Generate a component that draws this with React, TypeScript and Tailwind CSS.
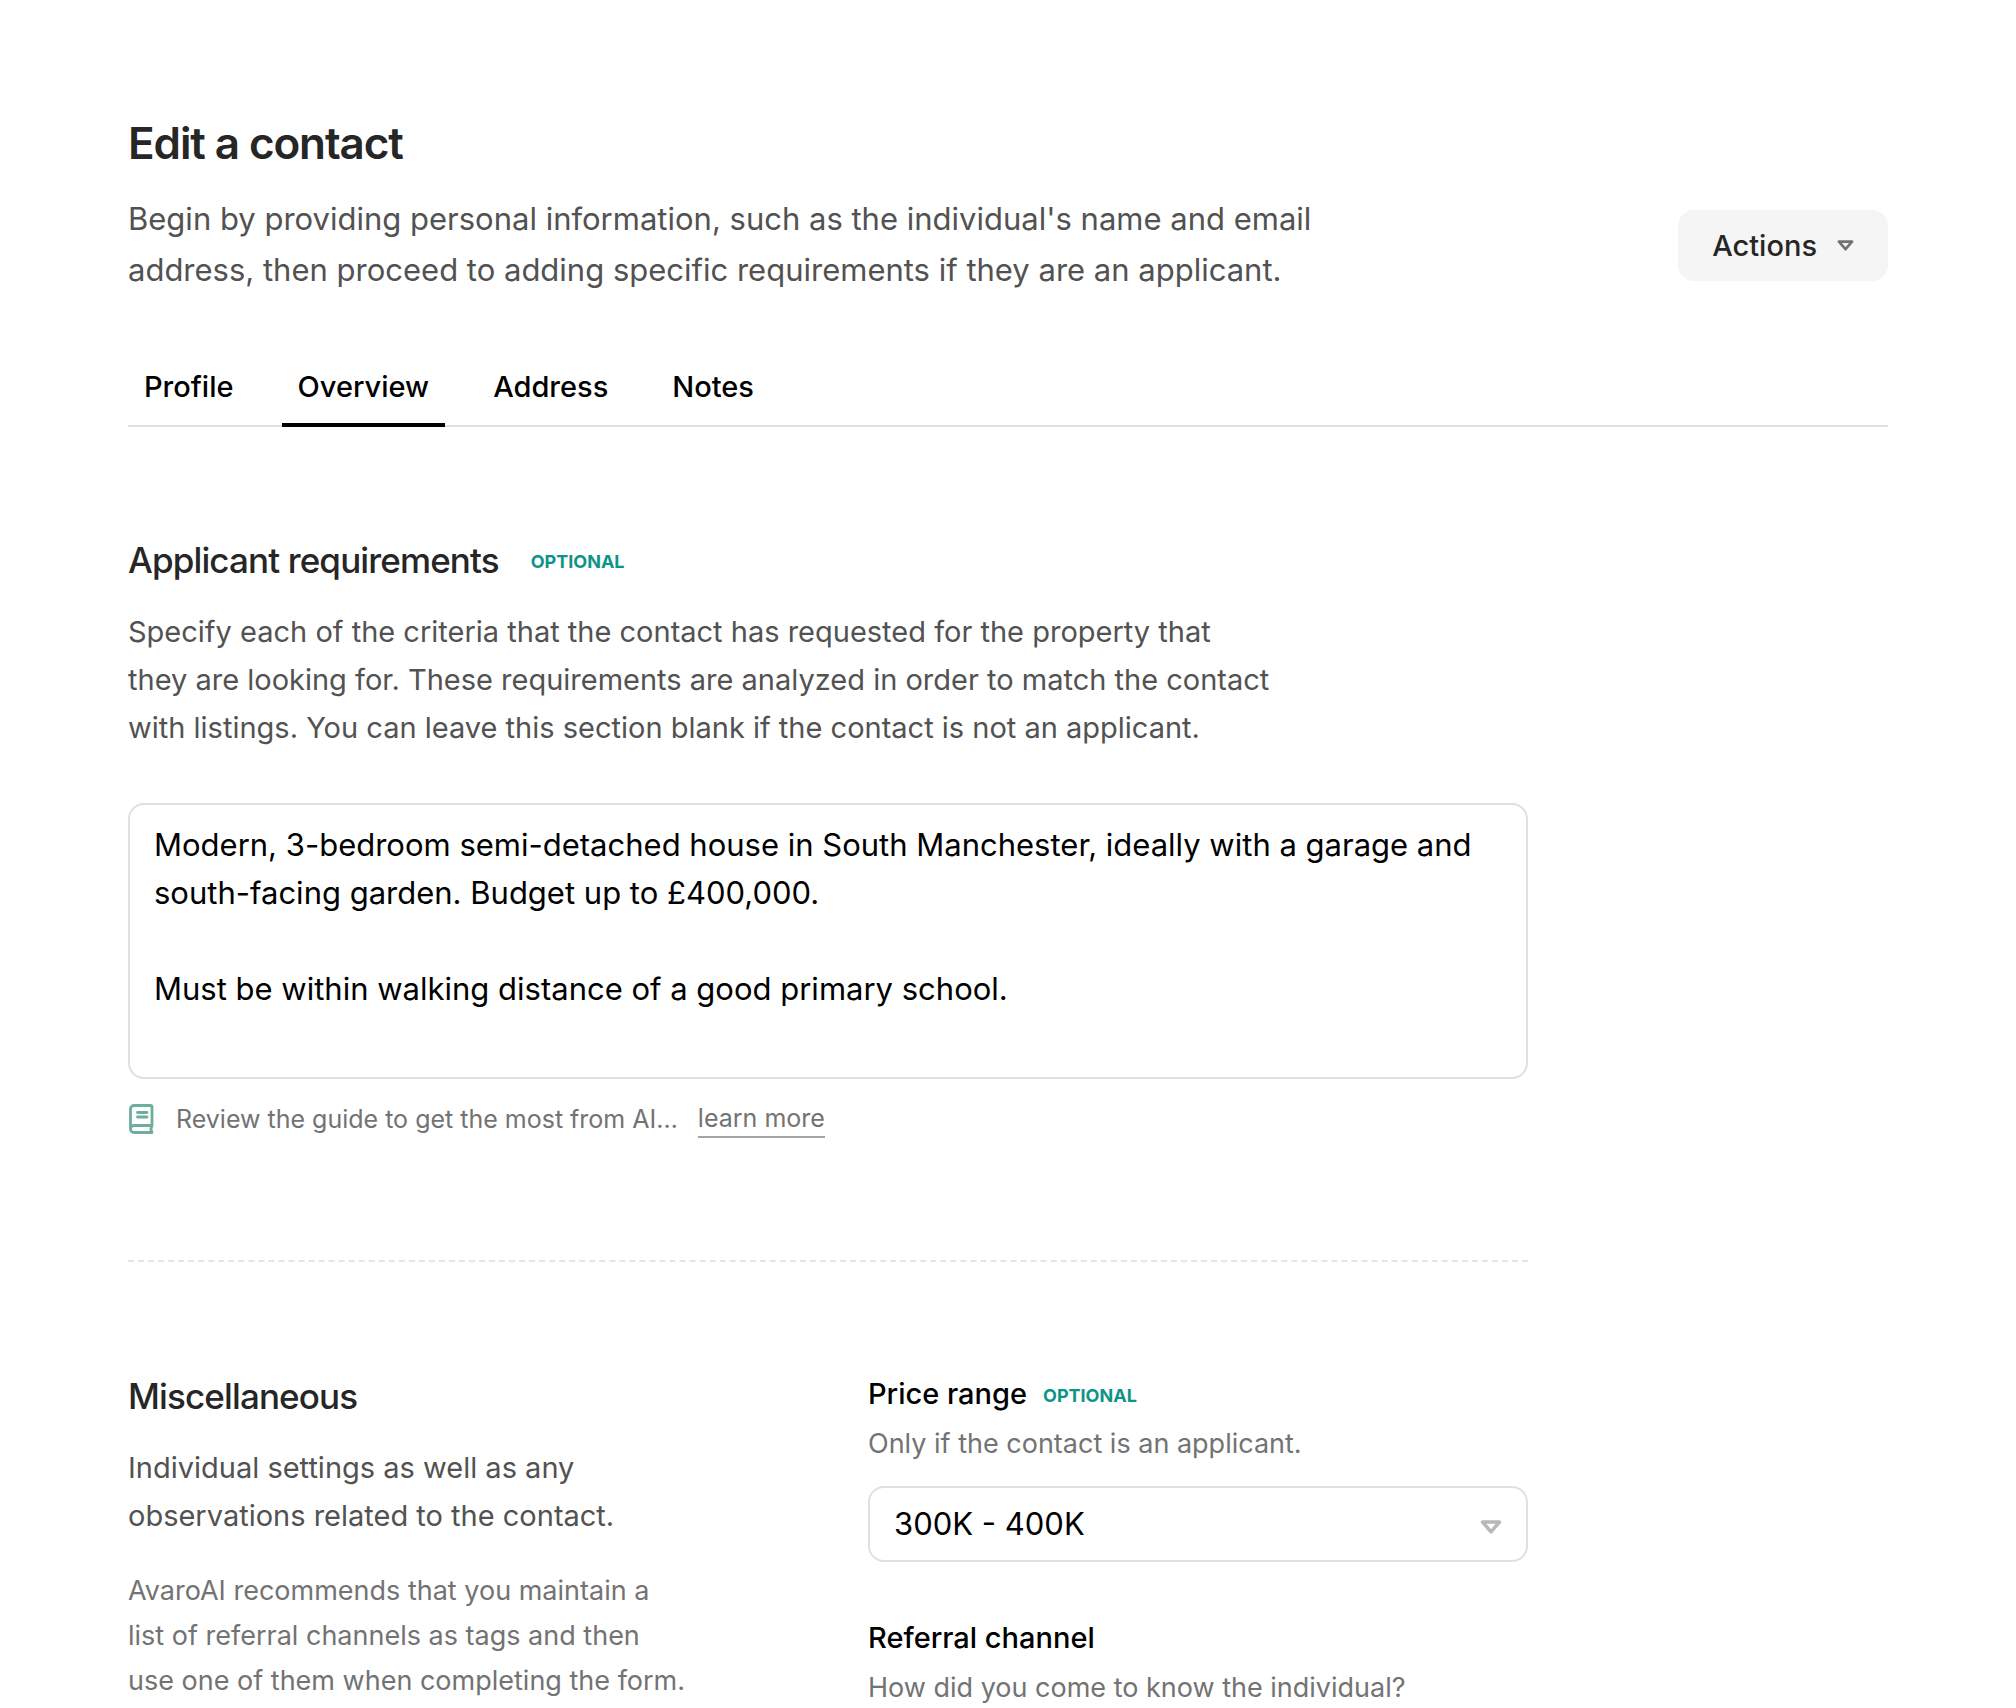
import React, { FC, ReactNode, useState } from 'react';

const TABS = ['Profile', 'Overview', 'Address', 'Notes'];

const PRICE_RANGES = ['100K - 200K', '200K - 300K', '300K - 400K', '400K - 500K'];

const DEFAULT_REQUIREMENTS = `Modern, 3-bedroom semi-detached house in South Manchester, ideally with a garage and south-facing garden. Budget up to £400,000.

Must be within walking distance of a good primary school.`;

const OptionalTag: FC = () => (
  <span className="mt-1 text-lg leading-6 font-bold text-[#0d9488]">OPTIONAL</span>
);

const TriangleIcon: FC<{ className?: string }> = ({ className }) => (
  <svg
    viewBox="0 0 22 14"
    fill="none"
    stroke="currentColor"
    strokeWidth="3.5"
    strokeLinejoin="round"
    aria-hidden="true"
    className={className}
  >
    <path d="M2.5 2h17L11 11.8z" />
  </svg>
);

const GuideIcon: FC = () => (
  <svg
    viewBox="0 0 26 30"
    fill="none"
    stroke="currentColor"
    strokeWidth="2.8"
    strokeLinecap="round"
    strokeLinejoin="round"
    aria-hidden="true"
    className="h-[30px] w-[26px] text-[#6fae9c]"
  >
    <path d="M2.5 25V5A3.5 3.5 0 0 1 6 1.500h16.500A1.500 1.500 0 0 1 24 3v18.500H6a3.500 3.500 0 0 0 0 7h18c-1.300-2.200-1.300-4.800 0-7" />
    <path d="M9.500 8.500h9.500M9.500 13h9.500" />
  </svg>
);

interface FieldLabelProps {
  htmlFor?: string;
  hint: string;
  children: ReactNode;
}

const FieldLabel: FC<FieldLabelProps> = ({ htmlFor, hint, children }) => (
  <div>
    <label htmlFor={htmlFor} className="flex items-center gap-4 text-[29px] leading-10 font-medium text-black">
      {children}
    </label>
    <p className="mt-2 text-[27px] leading-11 text-[#737373]">{hint}</p>
  </div>
);

export default function App() {
  const [activeTab, setActiveTab] = useState('Overview');
  const [requirements, setRequirements] = useState(DEFAULT_REQUIREMENTS);
  const [priceRange, setPriceRange] = useState('300K - 400K');

  return (
    <main className="min-h-screen bg-white px-32 pt-[119px] font-[Inter,sans-serif]">
      <header className="flex items-end justify-between gap-16">
        <div>
          <h1 className="text-[44px] leading-12 font-semibold tracking-tight text-[#262626]">Edit a contact</h1>
          <p className="mt-[26px] max-w-[1200px] text-[31px] leading-[51px] text-[#525252]">
            Begin by providing personal information, such as the individual's name and email address, then proceed to
            adding specific requirements if they are an applicant.
          </p>
        </div>
        <button
          type="button"
          className="mb-[14px] flex h-[71px] shrink-0 items-center gap-5 rounded-2xl bg-[#f5f5f5] px-[34px] text-[29px] font-medium text-[#262626]"
        >
          Actions
          <TriangleIcon className="h-[11px] w-[17px] text-[#737373]" />
        </button>
      </header>

      <nav className="mt-15 flex gap-8 border-b-2 border-[#e0e0e0]">
        {TABS.map((tab) => (
          <button
            key={tab}
            type="button"
            onClick={() => setActiveTab(tab)}
            className={`-mb-[2px] border-b-4 px-4 pt-3 pb-4 text-[29px] leading-10 font-medium text-black ${
              tab === activeTab ? 'border-black' : 'border-transparent'
            }`}
          >
            {tab}
          </button>
        ))}
      </nav>

      <div className="max-w-[1400px]">
        <section className="pt-[111px]">
          <div className="flex items-center gap-8">
            <h2 className="text-[35px] leading-11 font-medium tracking-tight text-[#262626]">
              <label htmlFor="requirements">Applicant requirements</label>
            </h2>
            <OptionalTag />
          </div>
          <p className="mt-[26px] max-w-[1144px] text-[29px] leading-12 text-[#525252]">
            Specify each of the criteria that the contact has requested for the property that they are looking for.
            These requirements are analyzed in order to match the contact with listings. You can leave this section
            blank if the contact is not an applicant.
          </p>
          <textarea
            id="requirements"
            value={requirements}
            onChange={(e) => setRequirements(e.target.value)}
            className="mt-[51px] block h-[276px] w-full resize-none overflow-hidden rounded-2xl border-2 border-[#e0e0e0] px-6 py-4 text-[31px] leading-12 text-black"
          />
          <div className="mt-5 flex items-center text-[25px] leading-10 text-[#737373]">
            <GuideIcon />
            <span className="ml-[22px]">Review the guide to get the most from AI…</span>
            <a href="#guide" className="ml-5 border-b-2 border-[#a3a3a3] leading-9">
              learn more
            </a>
          </div>
        </section>

        <hr className="mt-[121px] border-t-2 border-dashed border-[#e5e5e5]" />

        <section className="grid grid-cols-2 gap-20 pt-28">
          <div>
            <h2 className="text-[35px] leading-11 font-medium tracking-tight text-[#262626]">Miscellaneous</h2>
            <p className="mt-[26px] max-w-[500px] text-[29px] leading-12 text-[#525252]">
              Individual settings as well as any observations related to the contact.
            </p>
            <p className="mt-7 max-w-[560px] text-[27px] leading-[45px] text-[#737373]">
              AvaroAI recommends that you maintain a list of referral channels as tags and then use one of them when
              completing the form.
            </p>
          </div>

          <div>
            <FieldLabel htmlFor="price-range" hint="Only if the contact is an applicant.">
              Price range <OptionalTag />
            </FieldLabel>
            <div className="relative mt-5">
              <select
                id="price-range"
                value={priceRange}
                onChange={(e) => setPriceRange(e.target.value)}
                className="h-[76px] w-full appearance-none rounded-2xl border-2 border-[#e0e0e0] bg-white px-6 text-[31px] text-black"
              >
                {PRICE_RANGES.map((range) => (
                  <option key={range}>{range}</option>
                ))}
              </select>
              <TriangleIcon className="pointer-events-none absolute top-[34px] right-[26px] h-[14px] w-[22px] text-[#b8b8b8]" />
            </div>
            <div className="mt-14">
              <FieldLabel hint="How did you come to know the individual?">Referral channel</FieldLabel>
            </div>
          </div>
        </section>
      </div>
    </main>
  );
}
